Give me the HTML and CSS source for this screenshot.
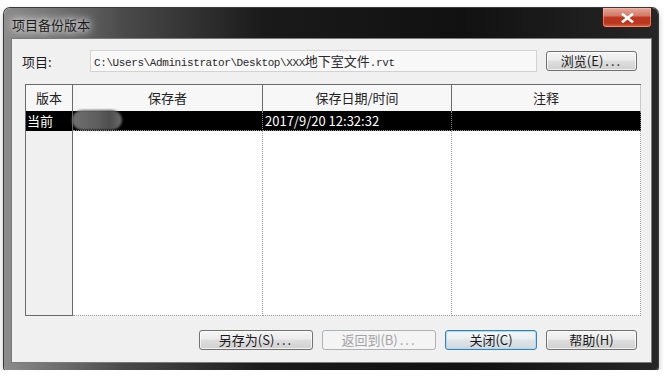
FILE: index.html
```html
<!DOCTYPE html>
<html lang="zh-CN">

<head>
    <meta charset="UTF-8" />
    <meta name="viewport" content="width=device-width, initial-scale=1.0" />
    <title>项目备份版本</title>
    <link rel="stylesheet" href="styles.css">
</head>

<body>
    <div class="win">
        <div class="titlebar">
            <span class="title">项目备份版本</span>
            <button class="close-btn" aria-label="关闭">
                <svg width="13" height="10" viewBox="0 0 13 10">
                    <path d="M2 1.5 L11 8.5 M11 1.5 L2 8.5" stroke="#fff" stroke-width="2.6" stroke-linecap="square" />
                </svg>
            </button>
        </div>

        <div class="client">
            <div class="path-row">
                <span class="lbl">项目:</span>
                <div class="path-box">C:\Users\Administrator\Desktop\XXX<span class="cjk">地下室文件</span>.rvt</div>
                <button class="btn btn-browse">浏览(E)<span class="dots">...</span></button>
            </div>

            <div class="list">
                <div class="hd">版本</div>
                <div class="hd">保存者</div>
                <div class="hd">保存日期/时间</div>
                <div class="hd hd-last">注释</div>

                <div class="cell sel first">当前</div>
                <div class="cell sel"><span class="blur"></span></div>
                <div class="cell sel">2017/9/20 12:32:32</div>
                <div class="cell sel last"></div>

                <div class="fill first"></div>
                <div class="fill"></div>
                <div class="fill"></div>
                <div class="fill last"></div>
            </div>

            <div class="btn-row">
                <button class="btn">另存为(S)<span class="dots">...</span></button>
                <button class="btn" disabled>返回到(B)<span class="dots">...</span></button>
                <button class="btn btn-focus">关闭(C)</button>
                <button class="btn">帮助(H)</button>
            </div>
        </div>
    </div>
</body>

</html>
```

FILE: styles.css
```css
body {
    margin: 0;
    background: #fff;
    font-family: "Noto Sans CJK SC", "Noto Sans", sans-serif;
    font-size: 13px;
    color: #1a1a1a;
}

.win {
    box-sizing: border-box;
    width: 654px;
    height: 362px;
    margin: 8px 0 0 4px;
    padding: 0 6px 7px 7px;
    display: flex;
    flex-direction: column;
    border-radius: 6px 6px 3px 3px;
    background: linear-gradient(to right, #8c8c8c 0, #4a4a4a 120px, #1a1a1a 260px, #111 70%, #262626 100%);
    box-shadow: 0 0 0 1px #3a3a3a, 0 3px 6px rgba(0, 0, 0, 0.35);
}

.titlebar {
    height: 30px;
    display: flex;
    justify-content: space-between;
    align-items: flex-start;
}

.title {
    margin: 8px 0 0 1px;
    font-size: 13px;
    line-height: 18px;
    color: #1c1c1c;
    text-shadow: 0 0 6px #e8e8e8, 0 0 10px #d8d8d8, 0 0 14px #ccc;
}

.close-btn {
    width: 50px;
    height: 20px;
    padding: 0;
    border: 1px solid #471910;
    border-top: none;
    border-radius: 0 0 4px 4px;
    background: linear-gradient(#e7a79a 0, #d27a68 40%, #c0381f 50%, #b8361e 80%, #d76a48 100%);
    box-shadow: inset 0 0 0 1px rgba(255, 200, 180, 0.45);
    display: flex;
    align-items: center;
    justify-content: center;
}

.client {
    flex: 1;
    box-sizing: border-box;
    background: #f0f0f0;
    border: 1px solid #7a7a7a;
    padding: 11px 10px 0 13px;
    display: flex;
    flex-direction: column;
}

.path-row {
    height: 22px;
    display: flex;
    align-items: center;
    padding-right: 4px;
}

.lbl {
    width: 68px;
    margin-left: -3px;
}

.path-box {
    box-sizing: border-box;
    width: 447px;
    height: 22px;
    margin-right: 9px;
    padding-left: 3px;
    border: 1px solid #d2d2d2;
    background: #f8f8f8;
    font-family: "Liberation Mono", "Noto Sans CJK SC", monospace;
    font-size: 11px;
    letter-spacing: -0.4px;
    line-height: 20px;
    color: #2a2a2a;
    white-space: nowrap;
}

.path-box .cjk {
    font-family: "Noto Sans CJK SC", sans-serif;
    font-size: 13px;
    letter-spacing: 0;
}

.btn {
    box-sizing: border-box;
    height: 20px;
    padding: 0;
    border: 1px solid #707070;
    border-radius: 3px;
    background: linear-gradient(#f4f4f4 0, #ececec 45%, #dedede 50%, #d0d0d0 100%);
    box-shadow: inset 0 0 0 1px rgba(255, 255, 255, 0.7);
    font-family: "Noto Sans CJK SC", sans-serif;
    font-size: 13px;
    line-height: 16px;
    color: #1a1a1a;
}

.dots {
    margin-left: 2px;
    letter-spacing: 2px;
}

.btn-browse {
    width: 91px;
}

.btn:disabled {
    border-color: #adb2b5;
    background: #f4f4f4;
    box-shadow: none;
    color: #a3a3a3;
}

.btn-focus {
    border-color: #3c7fb1;
    box-shadow: inset 0 0 0 1px #a8dcf5;
    background: linear-gradient(#f4f7f9 0, #eaeef1 45%, #dde3e7 50%, #d3d9dd 100%);
}

.list {
    box-sizing: border-box;
    height: 232px;
    margin-top: 12px;
    border-top: 1px solid #6a6a6a;
    border-left: 1px solid #6a6a6a;
    display: grid;
    grid-template-columns: 47px 190px 189px 1fr;
    grid-template-rows: 26px 20px 1fr;
}

.hd {
    box-sizing: border-box;
    background: #f7f7f7;
    border-right: 1px solid #6a6a6a;
    text-align: center;
    line-height: 25px;
    color: #222;
}

.hd-last {
    border-right: 1px solid #c8c8c8;
}

.cell {
    box-sizing: border-box;
    background: #000;
    color: #fff;
    line-height: 19px;
    padding-left: 2px;
    border-right: 1px dotted #8a8a8a;
    border-bottom: 1px dotted #9a9a9a;
    white-space: nowrap;
}

.cell.first {
    border-right: 1px solid #6a6a6a;
    border-bottom: none;
    padding-left: 1px;
}

.blur {
    display: inline-block;
    width: 50px;
    height: 20px;
    margin: -1px 0 0 -3px;
    vertical-align: top;
    border-radius: 10px;
    background: linear-gradient(to right, #707070, #5c5c5c 55%, #4e4e4e 75%, #6c6c6c);
    filter: blur(1px);
}

.fill {
    box-sizing: border-box;
    background: #fff;
    border-right: 1px dotted #9a9a9a;
    border-bottom: 1px dotted #9a9a9a;
}

.fill.first {
    background: #f0f0f0;
    border-right: 1px solid #6a6a6a;
    border-bottom: 1px solid #6a6a6a;
}

.btn-row {
    margin-top: 14px;
    padding-right: 4px;
    display: flex;
    justify-content: flex-end;
    gap: 9px;
}

.btn-row .btn:nth-child(1),
.btn-row .btn:nth-child(2) {
    width: 114px;
}

.btn-row .btn:nth-child(3) {
    width: 92px;
}

.btn-row .btn:nth-child(4) {
    width: 91px;
}
```
